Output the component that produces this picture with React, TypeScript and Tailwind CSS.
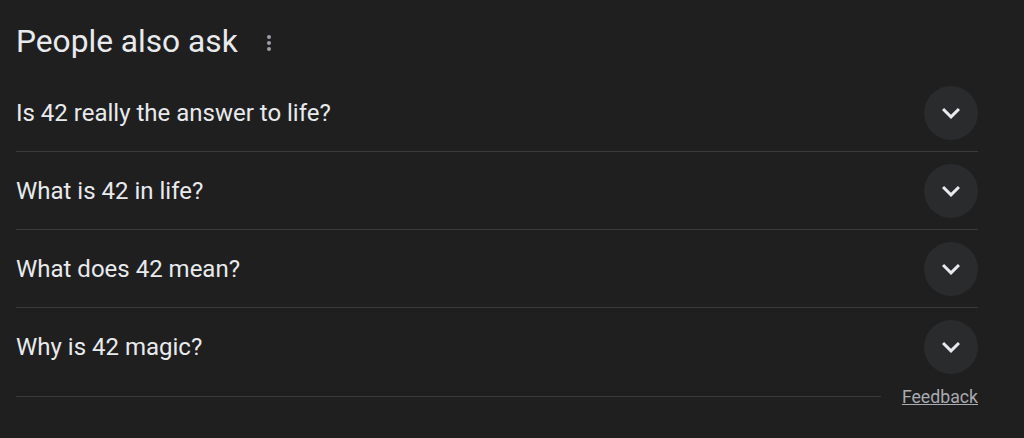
import React from "react";

const questions = [
  "Is 42 really the answer to life?",
  "What is 42 in life?",
  "What does 42 mean?",
  "Why is 42 magic?",
];

function Chevron() {
  return (
    <svg width="36" height="36" viewBox="0 0 24 24" fill="#e8eaed">
      <path d="M16.59 8.59L12 13.17 7.41 8.59 6 10l6 6 6-6z" />
    </svg>
  );
}

function Dots() {
  return (
    <svg width="6" height="18" viewBox="0 0 6 18" fill="#9aa0a6">
      <circle cx="3" cy="3" r="2" />
      <circle cx="3" cy="9" r="2" />
      <circle cx="3" cy="15" r="2" />
    </svg>
  );
}

export default function App() {
  return (
    <div
      className="w-[1024px] h-[438px] bg-[#1f1f1f] px-4 text-[#e8eaed]"
      style={{ fontFamily: "Roboto, 'Liberation Sans', sans-serif" }}
    >
      <div className="w-[962px]">
        <div className="h-[74px] pt-2 flex items-center">
          <h2 className="text-[31.7px] leading-[37px] font-normal">People also ask</h2>
          <div className="ml-[28px] mt-[3px] flex items-center">
            <Dots />
          </div>
        </div>
        {questions.map((q, i) => (
          <div
            key={q}
            className={
              "h-[78px] flex items-center justify-between " +
              (i < questions.length - 1 ? "border-b border-[#3a3a3a]" : "")
            }
          >
            <span className="text-[24px] leading-[30px]">{q}</span>
            <div className="w-[54px] h-[54px] rounded-full bg-[#2a2b2d] flex items-center justify-center">
              <Chevron />
            </div>
          </div>
        ))}
        <div className="h-[20px] flex items-center">
          <div className="flex-1 h-px bg-[#3a3a3a]" />
          <a className="ml-[21px] pt-[2px] text-[17.7px] leading-[20px] text-[#a8abb0] underline">Feedback</a>
        </div>
      </div>
    </div>
  );
}
